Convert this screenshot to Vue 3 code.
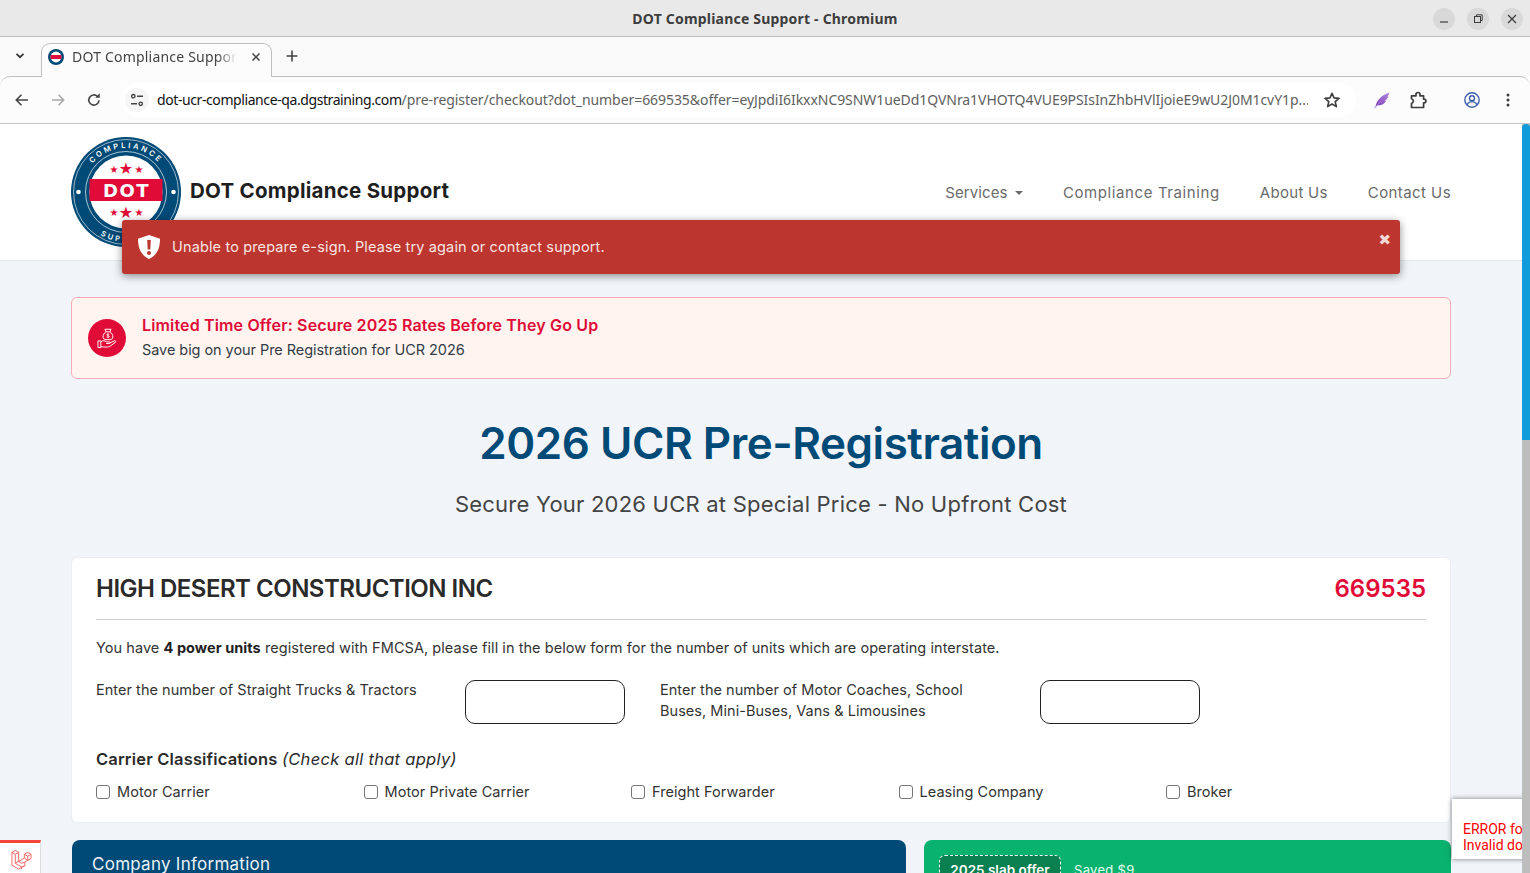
<script setup>
const carriers = ['Motor Carrier', 'Motor Private Carrier', 'Freight Forwarder', 'Leasing Company', 'Broker']
const navItems = ['Compliance Training', 'About Us', 'Contact Us']
</script>

<template>
  <div class="screen">
    <div class="titlebar">
      <span class="win-title">DOT Compliance Support - Chromium</span>
      <div class="win-btns">
        <span class="win-btn"><svg width="10" height="10" viewBox="0 0 10 10"><path d="M1 8h8" stroke="#3d3d3d" stroke-width="1.2"/></svg></span>
        <span class="win-btn"><svg width="10" height="10" viewBox="0 0 10 10" fill="none" stroke="#3d3d3d" stroke-width="1"><rect x="1.5" y="2.5" width="6" height="6"/><path d="M3.5 2.5V.8h5.7v5.7H7.5"/></svg></span>
        <span class="win-btn"><svg width="10" height="10" viewBox="0 0 10 10"><path d="M1 1l8 8M9 1l-8 8" stroke="#3d3d3d" stroke-width="1.2"/></svg></span>
      </div>
    </div>

    <div class="tabstrip">
      <svg class="tab-list" width="10" height="8" viewBox="0 0 10 8"><path d="M1.500 1.800L5 5.200l3.500-3.400" fill="none" stroke="#333" stroke-width="1.700"/></svg>
      <div class="tab">
        <svg class="favicon" width="16" height="16" viewBox="0 0 16 16"><circle cx="8" cy="8" r="8" fill="#004a77"/><circle cx="8" cy="8" r="5.400" fill="#fff"/><rect x="2.600" y="6" width="10.800" height="4" fill="#e00b37"/></svg>
        <span class="tab-title">DOT Compliance Support - Chromium</span>
        <svg class="tab-close" width="10" height="10" viewBox="0 0 10 10"><path d="M1.500 1.500l7 7M8.500 1.500l-7 7" stroke="#444" stroke-width="1.500"/></svg>
      </div>
      <svg class="tab-new" width="12" height="12" viewBox="0 0 12 12"><path d="M6 .5v11M.5 6h11" stroke="#444" stroke-width="1.600"/></svg>
    </div>

    <div class="toolbar">
      <svg class="tool back" width="16" height="16" viewBox="0 0 16 16"><path d="M14 8H2.500M7.500 2.800L2.300 8l5.200 5.200" fill="none" stroke="#444" stroke-width="1.600"/></svg>
      <svg class="tool fwd" width="16" height="16" viewBox="0 0 16 16"><path d="M2 8h11.500M8.500 2.800L13.700 8l-5.200 5.200" fill="none" stroke="#a9a9a9" stroke-width="1.600"/></svg>
      <svg class="tool reload" width="16" height="16" viewBox="0 0 16 16"><path d="M13 8.200A5.100 5.100 0 1 1 11.400 4.300" fill="none" stroke="#444" stroke-width="1.600"/><path d="M9.200 5.800h4.600V1.200z" fill="#444"/></svg>
      <div class="omnibox">
        <span class="site-ic"><svg width="14" height="14" viewBox="0 0 14 14" fill="none" stroke="#444" stroke-width="1.400"><circle cx="3.300" cy="3.200" r="1.700"/><path d="M7 3.200h6M1 10.800h6"/><circle cx="10.700" cy="10.800" r="1.700"/></svg></span>
        <span class="url"><span class="url-host">dot-ucr-compliance-qa.dgstraining.com</span><span class="url-rest">/pre-register/checkout?dot_number=669535&amp;offer=eyJpdiI6IkxxNC9SNW1ueDd1QVNra1VHOTQ4VUE9PSIsInZhbHVlIjoieE9wU2J0M1cvY1p...</span></span>
        <svg class="star" width="18" height="18" viewBox="0 0 18 18"><path d="M9 2.300l2 4.600 5 .5-3.800 3.300 1.200 4.900L9 13l-4.400 2.600 1.200-4.900L2 7.400l5-.5z" fill="none" stroke="#3d3d3d" stroke-width="1.600" stroke-linejoin="round"/></svg>
      </div>
      <svg class="feather" width="18" height="18" viewBox="0 0 18 18">
        <defs><linearGradient id="quill" x1="1" y1="0" x2="0" y2="1"><stop offset="0" stop-color="#b78ce0"/><stop offset="1" stop-color="#7a3db5"/></linearGradient></defs>
        <path d="M2.500 15.500C3.500 9.500 9 3.800 16.500 1.500c-.4 2-1.300 3.300-2.300 3.900.5 0 1 0 1.300-.1-1 2.600-2.500 4-3.700 4.700.5.100.9.100 1.300 0C11.500 12.800 8 14.800 4.500 14.300z" fill="url(#quill)"/>
        <path d="M1.500 17L8 10" stroke="#a678d6" stroke-width="1"/>
      </svg>
      <svg class="puzzle" width="18" height="18" viewBox="0 0 18 18"><path d="M2.500 4.800H7V3.500a2 2 0 0 1 4 0v1.300h3.600v3.300H15a1.900 1.900 0 0 1 0 3.800h-.4v4.600H2.500v-4a2.500 2.500 0 0 0 0-4.800z" fill="none" stroke="#3d3d3d" stroke-width="1.700" stroke-linejoin="round"/></svg>
      <svg class="profile" width="16" height="16" viewBox="0 0 16 16" fill="none" stroke="#3f5ea8" stroke-width="1.400"><circle cx="8" cy="8" r="7.200"/><circle cx="8" cy="6.200" r="2.500"/><path d="M3 13c1-2.600 3-3.400 5-3.400s4 .8 5 3.400"/></svg>
      <svg class="kebab" width="4" height="14" viewBox="0 0 4 14" fill="#3d3d3d"><circle cx="2" cy="2" r="1.500"/><circle cx="2" cy="7" r="1.500"/><circle cx="2" cy="12" r="1.500"/></svg>
    </div>

    <div class="viewport">
      <div class="page">
        <header class="site-header">
          <svg class="logo" width="110" height="110" viewBox="0 0 110 110">
            <defs>
              <path id="arcTop" d="M11 55a44 44 0 0 1 88 0"/>
              <path id="arcBottom" d="M5 55a50 50 0 0 0 100 0"/>
            </defs>
            <circle cx="55" cy="55" r="55" fill="#004a77"/>
            <circle cx="55" cy="55" r="52.500" fill="none" stroke="#dce8f0" stroke-width=".7"/>
            <circle cx="55" cy="55" r="40.500" fill="none" stroke="#d6e4ee" stroke-width=".8"/>
            <circle cx="55" cy="55" r="36.500" fill="#fff"/>
            <text class="arc-text"><textPath href="#arcTop" startOffset="50%" text-anchor="middle">COMPLIANCE</textPath></text>
            <text class="arc-text"><textPath href="#arcBottom" startOffset="50%" text-anchor="middle">SUPPORT</textPath></text>
            <circle cx="7.500" cy="55" r="2.300" fill="#fff"/>
            <circle cx="102.500" cy="55" r="2.300" fill="#fff"/>
            <rect x="18.500" y="42" width="73" height="22" fill="#e00b37"/>
            <text x="55.500" y="60" class="logo-dot" text-anchor="middle">DOT</text>
            <text x="55" y="37" class="logo-star" text-anchor="middle">★</text>
            <text x="43" y="36" class="logo-star-s" text-anchor="middle">★</text>
            <text x="68" y="36" class="logo-star-s" text-anchor="middle">★</text>
            <text x="55" y="81" class="logo-star" text-anchor="middle">★</text>
            <text x="43" y="79" class="logo-star-s" text-anchor="middle">★</text>
            <text x="68" y="79" class="logo-star-s" text-anchor="middle">★</text>
          </svg>
          <span class="brand">DOT Compliance Support</span>
          <nav class="nav">
            <a class="nav-link">Services <i class="caret"></i></a>
            <a v-for="n in navItems" :key="n" class="nav-link">{{ n }}</a>
          </nav>
        </header>

        <main class="content">
          <section class="offer">
            <span class="offer-ic">
              <svg width="21" height="21" viewBox="0 0 22 22" fill="none" stroke="#fff" stroke-width="1">
                <path d="M9.500 4L8.300 1.300h6.400L13.500 4M9.500 4h4M9.500 4C7.200 5.500 6.200 7.500 6.400 9.500c.1 1.800 1.500 2.700 3 2.700h4.200c1.500 0 2.900-.9 3-2.700.2-2-.8-4-3.100-5.500"/>
                <path d="M11.500 5.500v5M12.900 6.600c-.4-.6-2.600-.8-2.700.4-.1 1.300 2.800.8 2.800 2.100 0 1.100-2.400 1-3 .2" stroke-width=".8"/>
                <path d="M1 13.500h3v7H1zM4 14.500c2-1.500 4-1.500 6 0h3c1 0 1 1.700 0 1.700H9.500M13 16l5-2.500c1.500-.6 2.300 1 1 1.800l-6 4.200c-2.500 1-5.500.2-9 .2"/>
              </svg>
            </span>
            <div class="offer-text">
              <strong>Limited Time Offer: Secure 2025 Rates Before They Go Up</strong>
              <span>Save big on your Pre Registration for UCR 2026</span>
            </div>
          </section>

          <h1 class="headline">2026 UCR Pre-Registration</h1>
          <p class="subhead">Secure Your 2026 UCR at Special Price - No Upfront Cost</p>

          <section class="card">
            <div class="card-head">
              <h2>HIGH DESERT CONSTRUCTION INC</h2>
              <span class="dot-num">669535</span>
            </div>
            <p class="intro">You have <b>4 power units</b> registered with FMCSA, please fill in the below form for the number of units which are operating interstate.</p>
            <div class="units">
              <label class="unit-label first">Enter the number of Straight Trucks &amp; Tractors</label>
              <input class="unit-input" type="text">
              <label class="unit-label second">Enter the number of Motor Coaches, School Buses, Mini-Buses, Vans &amp; Limousines</label>
              <input class="unit-input" type="text">
            </div>
            <h3 class="class-title">Carrier Classifications <em>(Check all that apply)</em></h3>
            <div class="checks">
              <label v-for="c in carriers" :key="c" class="check"><span class="box"></span>{{ c }}</label>
            </div>
          </section>

          <div class="bottom">
            <section class="company"><h4>Company Information</h4></section>
            <section class="slab">
              <span class="slab-badge">2025 slab offer</span>
              <span class="slab-saved">Saved $9</span>
            </section>
          </div>
        </main>

        <div class="toast">
          <svg class="toast-ic" width="22" height="24" viewBox="0 0 22 24">
            <path d="M11 0l11 3.800c0 9-2.500 16-11 20.200C2.500 19.800 0 12.800 0 3.800z" fill="#fff"/>
            <path d="M9.200 5h3.600l-.5 9.500H9.700z" fill="#bc352e"/>
            <circle cx="11" cy="18" r="2" fill="#bc352e"/>
          </svg>
          <span class="toast-msg">Unable to prepare e-sign. Please try again or contact support.</span>
          <span class="toast-x">✖</span>
        </div>

        <div class="debugbar">
          <svg width="21" height="21" viewBox="0 0 22 22" fill="none" stroke="#f4645f" stroke-width="1">
            <path d="M1 3.500L4.500 1.500 8 3.500V13l6-3.500v-4l3.500-2L21 5.500V10l-6.500 3.700v3.800L8 21l-7-4z"/>
            <path d="M1 3.500l3.500 2L8 3.500M4.500 5.500V15L8 13M4.500 15l6.500 3.800V21M11 18.800l3.500-1.300M14 5.500l3.500 2L21 5.500M17.500 7.500V12M14 9.500l3.500 2.300M8 13l3 2 3.500-1.300"/>
          </svg>
        </div>

        <div class="recaptcha">
          <span>ERROR for site owner:</span>
          <span>Invalid domain for site key</span>
        </div>
      </div>
      <div class="scrollbar"><div class="thumb"></div></div>
    </div>
  </div>
</template>

<style>
html, body { margin: 0; overflow: hidden; }
</style>

<style scoped>
.screen { width: 1530px; height: 873px; display: flex; flex-direction: column; overflow: hidden; font-family: Inter, "Noto Sans", sans-serif; }
.titlebar { height: 36px; flex: none; background: #e9e9e9; border-bottom: 1px solid #bdbdbd; display: flex; align-items: center; justify-content: center; position: relative; }
.win-title { font: 700 14px "Noto Sans", sans-serif; color: #3d3d3d; letter-spacing: .2px; }
.win-btns { position: absolute; right: 7px; top: 8px; display: flex; gap: 12px; }
.win-btn { width: 22px; height: 22px; border-radius: 50%; background: #d9d9d9; display: flex; align-items: center; justify-content: center; }
.tabstrip { height: 39px; flex: none; background: #f9f9f9; display: flex; align-items: flex-end; position: relative; }
.tab-list { margin: 0 16px 16px 15px; }
.tab { width: 231px; height: 34px; margin-bottom: -1px; box-sizing: border-box; background: #fcfcfc; border: 1px solid #bfbfbf; border-bottom: 0; border-radius: 9px 9px 0 0; display: flex; align-items: center; padding: 0 10px 7px 6px; position: relative; z-index: 2; }
.favicon { flex: none; }
.tab-title { font: 14px "Noto Sans", sans-serif; color: #444; margin-left: 8px; padding-bottom: 2px; width: 165px; letter-spacing: .2px; white-space: nowrap; overflow: hidden; -webkit-mask-image: linear-gradient(90deg, #000 88%, transparent 100%); mask-image: linear-gradient(90deg, #000 88%, transparent 100%); }
.tab-close { margin-left: 14px; flex: none; }
.tab-new { margin: 0 0 14px 14px; }
.toolbar { height: 48px; flex: none; box-sizing: border-box; background: #fcfcfc; border-top: 1px solid #bfbfbf; border-bottom: 1px solid #c4c4c4; border-radius: 10px 10px 0 0; display: flex; align-items: center; position: relative; }
.tool { flex: none; }
.back { margin-left: 14px; }
.fwd { margin-left: 20px; }
.reload { margin-left: 20px; margin-right: 18px; }
.omnibox { width: 1236px; height: 34px; background: #fff; border-radius: 17px; display: flex; align-items: center; position: relative; }
.site-ic { width: 24px; height: 24px; margin-left: 5px; border-radius: 50%; background: #f6f6f6; display: flex; align-items: center; justify-content: center; }
.url { font: 14px "Noto Sans", sans-serif; margin-left: 8px; padding-bottom: 2px; white-space: nowrap; letter-spacing: -.065px; width: 1151px; overflow: hidden; }
.url-host { color: #111; letter-spacing: -.41px; }
.url-rest { color: #606060; }
.star { margin-left: 15px; }
.feather { margin-left: 17px; }
.puzzle { margin-left: 18px; }
.profile { margin-left: 37px; }
.kebab { margin-left: 26px; }

.viewport { flex: 1; min-height: 0; display: flex; }
.page { flex: 1; position: relative; background: #f1f5fa; overflow: hidden; color: #333; }
.scrollbar { width: 8px; background: #bdbdbd; flex: none; }
.thumb { height: 316px; background: #109bdb; border-radius: 4px 4px 0 0; }

.site-header { height: 137px; box-sizing: border-box; background: #fff; border-bottom: 1px solid #e4e8ec; padding: 13px 71px 0; display: flex; align-items: flex-start; }
.logo { flex: none; }
.arc-text { font: 600 7.500px Inter, sans-serif; letter-spacing: 2.600px; fill: #fff; }
.logo-dot { font: 700 18px "DejaVu Sans", sans-serif; letter-spacing: 1.500px; fill: #fff; }
.logo-star { font: 16px "DejaVu Sans", sans-serif; fill: #e00b37; }
.logo-star-s { font: 10px "DejaVu Sans", sans-serif; fill: #e00b37; }
.brand { font: 700 20.500px Inter, sans-serif; color: #1e1e1e; margin: 41px 0 0 9px; letter-spacing: .26px; }
.nav { margin-left: auto; display: flex; gap: 40px; margin-top: 47px; }
.nav-link { font-size: 15px; color: #6b6b6b; line-height: 18px; letter-spacing: .42px; }
.nav-link:first-child { letter-spacing: .1px; }
.nav-link:nth-child(2) { letter-spacing: .6px; }
.nav-link:nth-child(3) { letter-spacing: .3px; }
.caret { display: inline-block; border: 4px solid transparent; border-top-color: #6b6b6b; border-bottom: 0; margin: 0 0 3px 3px; }

.content { padding: 36px 71px 0; }
.offer { height: 82px; box-sizing: border-box; background: #fff4ef; border: 1px solid #f6abb8; border-radius: 6px; display: flex; align-items: center; padding: 0 16px; }
.offer-ic { width: 38px; height: 38px; border-radius: 50%; background: #e00b37; display: flex; align-items: center; justify-content: center; flex: none; }
.offer-text { margin-left: 16px; padding-bottom: 2px; display: flex; flex-direction: column; gap: 5px; }
.offer-text strong { font-size: 16px; font-weight: 600; line-height: 20px; color: #e00b37; letter-spacing: .15px; }
.offer-text span { font-size: 14.500px; line-height: 20px; color: #333d47; letter-spacing: -.06px; }
.headline { margin: 32px 0 0; text-align: center; font-size: 44px; line-height: 64px; font-weight: 600; color: #004a77; letter-spacing: -.46px; }
.subhead { margin: 12px 0 0; text-align: center; font-size: 22px; line-height: 34px; color: #444; letter-spacing: .22px; }
.card { margin-top: 36px; height: 266px; box-sizing: border-box; background: #fff; border: 1px solid #e9eef4; border-radius: 6px; padding: 0 24px; }
.card-head { height: 62px; box-sizing: border-box; border-bottom: 1px solid #cfcfcf; display: flex; align-items: center; justify-content: space-between; }
.card-head h2 { margin: 0; font-size: 24px; font-weight: 600; color: #2a2a2a; letter-spacing: -.5px; }
.dot-num { font-size: 24px; font-weight: 600; color: #e00b37; }
.intro { margin: 17px 0 0; font-size: 14.500px; line-height: 22px; color: #333; letter-spacing: .06px; }
.intro b { font-weight: 700; color: #222; }
.units { display: flex; align-items: flex-start; margin-top: 21px; }
.unit-label { font-size: 14.500px; line-height: 21px; color: #333; margin-top: -1px; letter-spacing: .04px; }
.unit-label.first { width: 369px; }
.unit-label.second { width: 345px; margin-left: 35px; margin-right: 35px; }
.unit-input { width: 160px; height: 44px; box-sizing: border-box; border: 1px solid #222; border-radius: 10px; background: #fff; padding: 0; outline: none; }
.class-title { margin: 24px 0 0; font-size: 16.500px; line-height: 22px; font-weight: 600; color: #2b2b2b; letter-spacing: .17px; }
.class-title em { font-weight: 400; letter-spacing: .3px; }
.checks { display: grid; grid-template-columns: repeat(5, 267.500px); margin-top: 11px; }
.check { display: flex; align-items: center; font-size: 14.500px; line-height: 22px; color: #333; letter-spacing: .05px; }
.box { width: 12px; height: 12px; border: 1px solid #767676; border-radius: 3px; margin-right: 7px; background: #fff; flex: none; }
.bottom { display: flex; gap: 18px; margin: 17px 0 0 1px; }
.company { width: 834px; height: 60px; box-sizing: border-box; background: #004a77; border-radius: 8px 8px 0 0; padding: 12px 20px; }
.company h4 { margin: 0; font-size: 17px; font-weight: 400; line-height: 24px; color: #eaf2f8; letter-spacing: .26px; }
.slab { flex: 1; height: 60px; box-sizing: border-box; background: #0ab26f; border-radius: 8px 8px 0 0; padding: 15px 15px; display: flex; align-items: flex-start; }
.slab-badge { box-sizing: border-box; width: 122px; height: 36px; background: #0a7f50; border: 1px dashed #fff; border-radius: 6px; color: #fff; font-size: 13.500px; font-weight: 600; line-height: 22px; text-align: center; padding-top: 3px; }
.slab-saved { margin: 7px 0 0 13px; font-size: 13px; line-height: 16px; color: #e6fff4; letter-spacing: .3px; }

.toast { position: absolute; left: 122px; top: 96px; width: 1278px; height: 54px; box-sizing: border-box; background: #bc352e; border-radius: 3px; box-shadow: 0 2px 9px rgba(0,0,0,.45); display: flex; align-items: center; padding: 0 16px; }
.toast-ic { flex: none; }
.toast-msg { margin-left: 12px; padding-bottom: 2px; font-size: 14.500px; color: #f7e4e2; letter-spacing: .14px; }
.toast-x { position: absolute; right: 9px; top: 10px; font: 15px/20px "DejaVu Sans", sans-serif; color: #f6d8d5; }
.debugbar { position: absolute; left: 0; top: 716px; width: 41px; height: 33px; box-sizing: border-box; background: #fff; border-top: 3px solid #f4453c; border-right: 1px solid #ddd; display: flex; align-items: center; justify-content: center; padding: 3px 0 0 2px; }
.recaptcha { position: absolute; left: 1452px; top: 675px; width: 256px; height: 60px; box-sizing: border-box; background: #fff; box-shadow: 0 0 5px rgba(0,0,0,.5); padding: 22px 0 0 11px; display: flex; flex-direction: column; font: 14px/16px Roboto, sans-serif; color: #f00; white-space: nowrap; }
</style>
